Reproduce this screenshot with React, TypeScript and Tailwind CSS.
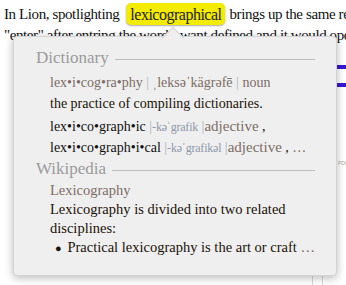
const serif = { fontFamily: '"Liberation Serif", "DejaVu Serif", serif' };

function Rule() {
  return <div className="flex-1 h-px bg-[#bdbdbd] mt-[3px]" />;
}

export default function App() {
  return (
    <div className="relative w-[346px] h-[285px] overflow-hidden bg-white text-[#111]" style={serif}>
      {/* page text behind the popover */}
      <div className="pl-[4px] pt-[3px] text-[15px] leading-[19px] tracking-[-0.4px] whitespace-nowrap">
        <div className="flex items-center h-[22px]">
          <span>In Lion, spotlighting</span>
          <span className="ml-[7px] mr-[4px] inline-flex items-center h-[22px] px-[4px] pt-[1px] rounded-[5px] bg-[#f3ec00] shadow-[0_1px_2px_rgba(0,0,0,0.35)] text-[#222] text-[16px] tracking-[-0.5px]">
            lexicographical
          </span>
          <span>brings up the same results</span>
        </div>
        <div className="mt-[1px]">"enter" after entring the word I want defined and it would open</div>
      </div>

      {/* background bits at the right edge */}
      <div className="absolute left-[337px] top-[65px] w-[12px] h-[4px] bg-[#3a16d6]" />
      <div className="absolute left-[337px] top-[83px] w-[12px] h-[4px] bg-[#3a16d6]" />
      <div className="absolute left-[338px] top-[160px] text-[5px] text-[#aaa]" style={{ fontFamily: '"Liberation Sans", sans-serif' }}>PDF</div>
      <div className="absolute left-[312px] top-[276px] w-px h-[12px] bg-[#d8d8d8]" />
      <div className="absolute left-[322px] top-[276px] w-px h-[12px] bg-[#d8d8d8]" />

      {/* popover */}
      <div className="absolute left-[13px] top-[36px] w-[324px] h-[240px] rounded-[4px] bg-[#efefef] border border-[#d4d4d4] shadow-[0_2px_8px_rgba(0,0,0,0.28)]">
        {/* arrow */}
        <div className="absolute left-[151px] top-[-7px] w-[16px] h-[16px] rotate-45 bg-[#efefef] border-l border-t border-[#d4d4d4]" />

        <div className="relative pl-[22px] pr-[21px] pt-[10px]">
          <div className="flex items-center gap-[6px]">
            <span className="text-[17px] leading-[22px] text-[#9b9b9b]">Dictionary</span>
            <Rule />
          </div>

          <div className="pl-[14px]">
            <div className="mt-[4px] text-[14px] leading-[20px] text-[#7c6d66] whitespace-nowrap">
              lex•i•cog•ra•phy <span className="text-[#a9b3c4]">|</span> ˌleksəˈkägrəfē <span className="text-[#a9b3c4]">|</span> noun
            </div>
            <div className="mt-[1px] text-[14px] leading-[20px] text-[#1a1208] whitespace-nowrap">
              the practice of compiling dictionaries.
            </div>
            <div className="mt-[2px] text-[14px] leading-[20px] text-[#111] whitespace-nowrap">
              lex•i•co•graph•ic <span className="text-[#a9b3c4]">|</span><span className="text-[12px] text-[#8e98aa] tracking-[-0.2px]">-kəˈgrafik</span>{' '}
              <span className="text-[#a9b3c4]">|</span>
              <span className="text-[15px] text-[#7c6d66]">adjective</span> ,
            </div>
            <div className="text-[14px] leading-[20px] text-[#111] whitespace-nowrap">
              lex•i•co•graph•i•cal <span className="text-[#a9b3c4]">|</span><span className="text-[12px] text-[#8e98aa] tracking-[-0.2px]">-kəˈgrafikəl</span>{' '}
              <span className="text-[#a9b3c4]">|</span>
              <span className="text-[15px] text-[#7c6d66]">adjective</span> , <span className="text-[#7c6d66]">…</span>
            </div>
          </div>

          <div className="flex items-center gap-[6px]">
            <span className="text-[17px] leading-[22px] text-[#9b9b9b]">Wikipedia</span>
            <Rule />
          </div>

          <div className="pl-[14px]">
            <div className="mt-[1px] text-[14.5px] leading-[19px] text-[#7c6d66]">Lexicography</div>
            <div className="text-[14.5px] leading-[19px] text-[#1a1208]">
              Lexicography is divided into two related disciplines:
            </div>
            <div className="flex items-baseline text-[14.5px] leading-[19px] text-[#1a1208] whitespace-nowrap">
              <span className="w-[21px] pl-[5px] text-[11px]">●</span>
              <span>Practical lexicography is the art or craft <span className="text-[#7c6d66]">…</span></span>
            </div>
          </div>
        </div>
      </div>
    </div>
  );
}
